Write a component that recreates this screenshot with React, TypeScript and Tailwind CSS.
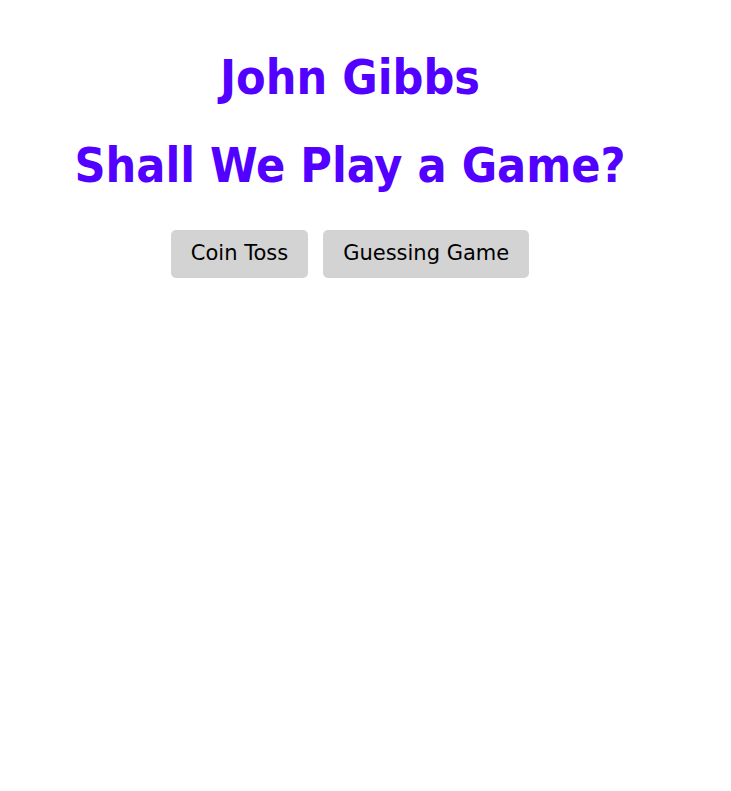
export default function App() {
  return (
    <div className="w-[700px] bg-white text-center" style={{ fontFamily: '"DejaVu Sans Condensed", "DejaVu Sans", sans-serif' }}>
      <h1 className="pt-[48px] text-[48px] font-bold leading-[58px] text-[#5200ff]">John Gibbs</h1>
      <h2 className="mt-[30px] text-[48px] font-bold leading-[58px] text-[#5200ff]">Shall We Play a Game?</h2>
      <div className="mt-[36px] flex justify-center gap-[15px]" style={{ fontFamily: '"DejaVu Sans", sans-serif' }}>
        <button className="h-[48px] rounded-[5px] bg-[#d3d3d3] px-[20px] text-[21px] text-black">Coin Toss</button>
        <button className="h-[48px] rounded-[5px] bg-[#d3d3d3] px-[20px] text-[21px] text-black">Guessing Game</button>
      </div>
    </div>
  );
}
